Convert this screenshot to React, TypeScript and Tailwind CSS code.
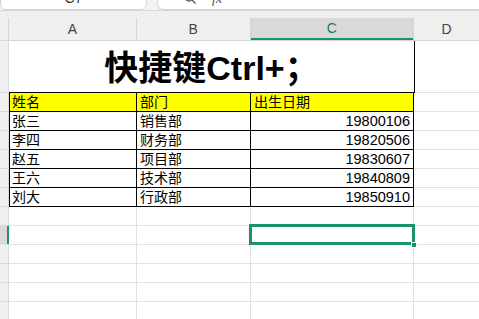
import { type ReactElement } from "react";

const rows: [string, string, string][] = [
  ["张三", "销售部", "19800106"],
  ["李四", "财务部", "19820506"],
  ["赵五", "项目部", "19830607"],
  ["王六", "技术部", "19840809"],
  ["刘大", "行政部", "19850910"],
];

const font = {
  fontFamily: '"Liberation Sans", "Noto Sans CJK SC", sans-serif',
};

function RowHead({ active }: { active?: boolean }): ReactElement {
  if (active) {
    return (
      <div className="h-full w-[9px] shrink-0 border-b border-[#e1e1e1] bg-[#d9d9d9] pl-[7px]">
        <div className="h-full w-[2px] bg-[#1a9467]" />
      </div>
    );
  }
  return (
    <div className="h-full w-[9px] shrink-0 border-r border-b border-[#dadada] bg-[#efefef]" />
  );
}

function EmptyRow({ active }: { active?: boolean }): ReactElement {
  return (
    <div className="flex h-[19px]">
      <RowHead active={active} />
      <div className="w-[128px] border-r border-b border-[#e1e1e1]" />
      <div className="w-[114px] border-r border-b border-[#e1e1e1]" />
      <div className="relative w-[163px] border-r border-b border-[#e1e1e1]">
        {active && (
          <>
            <div className="absolute -top-[2px] -left-[2px] z-10 h-[21px] w-[166px] border-[3px] border-[#1a9467]" />
            <div className="absolute -right-[4px] -bottom-[4px] z-20 h-[6px] w-[6px] border border-white bg-[#1a9467]" />
          </>
        )}
      </div>
      <div className="flex-1 border-b border-[#e1e1e1]" />
    </div>
  );
}

export default function App(): ReactElement {
  return (
    <div className="h-[319px] w-[479px] overflow-hidden bg-white text-black" style={font}>
      {/* formula toolbar, scrolled so only its bottom shows */}
      <div className="flex h-[11px] gap-[10px] overflow-hidden border-b border-[#d6d6d6] bg-[#f3f3f3]">
        <div className="-mt-[14px] flex h-[24px] w-[147px] shrink-0 items-center justify-center rounded-b-[6px] border border-[#d3d3d3] bg-white text-[14px] text-[#333]">
          C7
        </div>
        <div className="-mt-[14px] flex h-[24px] flex-1 items-center gap-4 rounded-bl-[6px] border border-r-0 border-[#d3d3d3] bg-white pl-[26px] text-[14px] text-[#555]">
          <svg width="12" height="12" viewBox="0 0 12 12" fill="none" stroke="#555" strokeWidth="1.3">
            <circle cx="5" cy="5" r="4" />
            <path d="M8 8l3.5 3.5" />
          </svg>
          <span className="italic" style={{ fontFamily: '"Liberation Serif", serif' }}>fx</span>
        </div>
      </div>

      {/* column headers */}
      <div className="flex h-[30px] border-b border-[#d6d6d6] bg-[#efefef] pt-[7px] text-[14px] text-[#444]">
        <div className="w-[9px] shrink-0 border-r border-[#d6d6d6]" />
        <div className="flex w-[128px] items-center justify-center border-r border-[#d6d6d6]">A</div>
        <div className="flex w-[114px] items-center justify-center border-r border-[#d6d6d6]">B</div>
        <div className="flex w-[163px] items-center justify-center border-b-2 border-[#1a9467] bg-[#d9d9d9] text-[#1c7a57]">
          C
        </div>
        <div className="flex w-[66px] items-center justify-center border-l border-[#d6d6d6]">D</div>
      </div>

      {/* title row */}
      <div className="flex h-[52px]">
        <RowHead />
        <div className="flex w-[406px] items-center justify-center border-r border-b border-black pt-[3px] text-[34px] font-bold">
          快捷键Ctrl+；
        </div>
        <div className="flex-1 border-b border-[#e1e1e1]" />
      </div>

      {/* yellow header */}
      <div className="flex h-[19px] text-[14px] leading-[18px]">
        <RowHead />
        <div className="w-[128px] border-r border-b border-l border-black bg-[#ffff00] pl-[2px]">姓名</div>
        <div className="w-[114px] border-r border-b border-black bg-[#ffff00] pl-[3px]">部门</div>
        <div className="w-[163px] border-r border-b border-black bg-[#ffff00] pl-[3px]">出生日期</div>
        <div className="flex-1 border-b border-[#e1e1e1]" />
      </div>

      {rows.map(([name, dept, date]) => (
        <div key={name} className="flex h-[19px] text-[14px] leading-[18px]">
          <RowHead />
          <div className="w-[128px] border-r border-b border-l border-black pl-[2px]">{name}</div>
          <div className="w-[114px] border-r border-b border-black pl-[3px]">{dept}</div>
          <div className="w-[163px] border-r border-b border-black pr-[3px] text-right text-[14.5px]">{date}</div>
          <div className="flex-1 border-b border-[#e1e1e1]" />
        </div>
      ))}

      <EmptyRow />
      <EmptyRow active />
      <EmptyRow />
      <EmptyRow />
      <EmptyRow />
      <EmptyRow />
    </div>
  );
}
